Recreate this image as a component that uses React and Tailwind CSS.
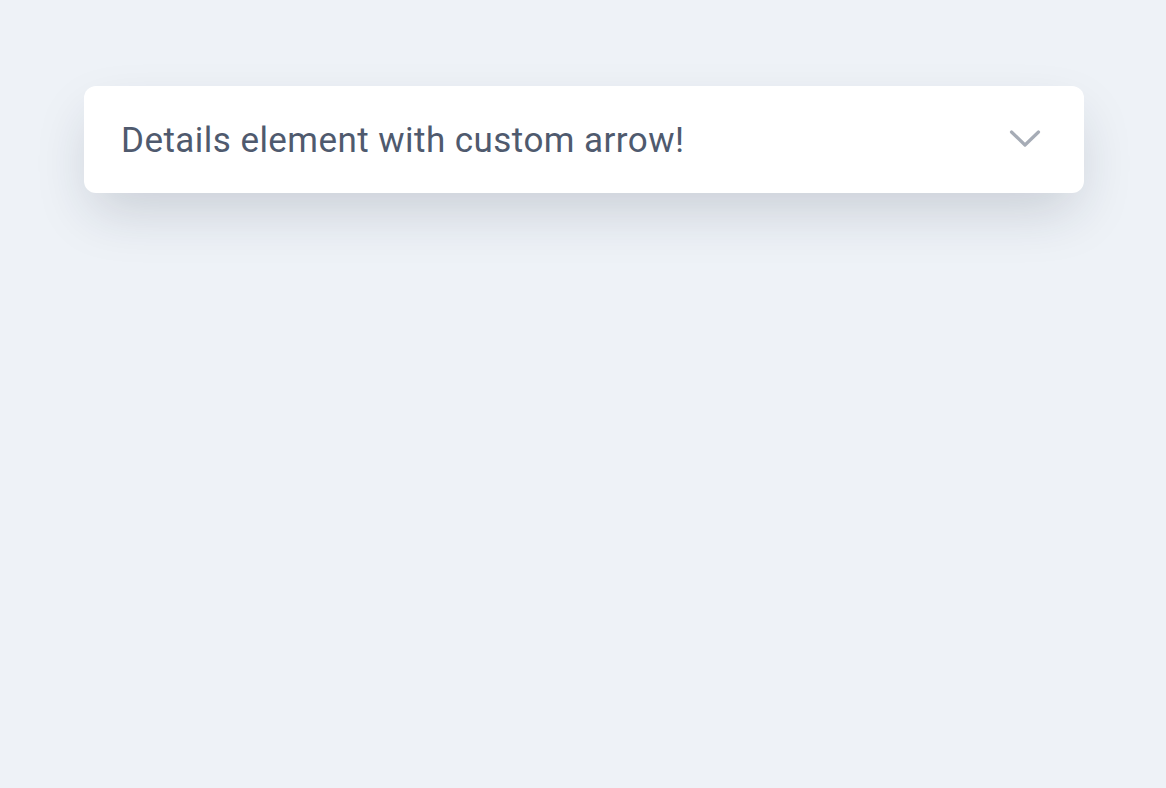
export default function App() {
  return (
    <div className="min-h-[788px] w-full bg-[#eef2f7] pt-[86px] pl-[84px]">
      <div className="w-[1000px] rounded-xl bg-white shadow-[0_24px_55px_-8px_rgba(30,41,59,0.18)] flex items-center justify-between pl-[37px] pr-[42px] h-[107px]">
        <span className="mt-[4px] text-[35px] text-[#4f5a6e] tracking-[0.45px] font-['Roboto',sans-serif]">
          Details element with custom arrow!
        </span>
        <svg width="34" height="20" viewBox="0 0 34 20" fill="none">
          <polyline points="3.5,2 17,15 30.5,2" stroke="#a6acb6" strokeWidth="3.2" strokeLinecap="round" strokeLinejoin="round" />
        </svg>
      </div>
    </div>
  );
}
